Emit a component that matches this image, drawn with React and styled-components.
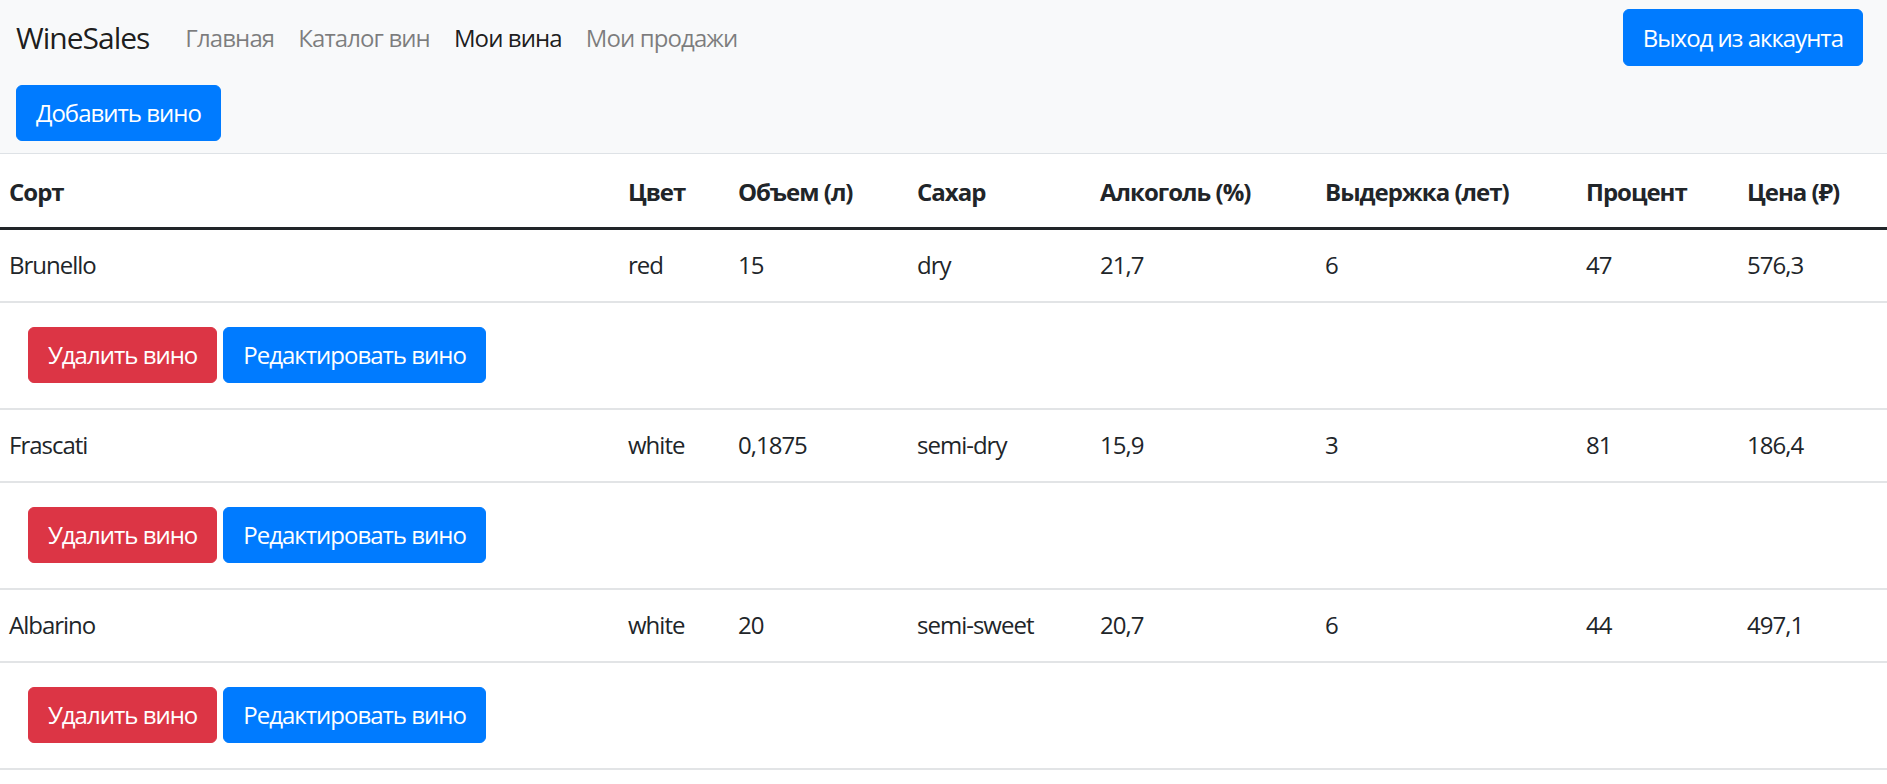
import styled, { createGlobalStyle } from "styled-components";

const GlobalStyle = createGlobalStyle`
  * { box-sizing: border-box; }
  html, body {
    margin: 0;
    padding: 0;
    background: #fff;
  }
  body {
    font-family: "Segoe UI", "Open Sans", "Noto Sans", sans-serif;
    font-size: 24px;
    line-height: 1.5;
    color: #212529;
    letter-spacing: -1px;
  }
`;

const wines = [
  { sort: "Brunello", color: "red", volume: "15", sugar: "dry", alcohol: "21,7", age: "6", percent: "47", price: "576,3" },
  { sort: "Frascati", color: "white", volume: "0,1875", sugar: "semi-dry", alcohol: "15,9", age: "3", percent: "81", price: "186,4" },
  { sort: "Albarino", color: "white", volume: "20", sugar: "semi-sweet", alcohol: "20,7", age: "6", percent: "44", price: "497,1" },
];

const columns = [
  { title: "Сорт", width: 619 },
  { title: "Цвет", width: 110 },
  { title: "Объем (л)", width: 179 },
  { title: "Сахар", width: 183 },
  { title: "Алкоголь (%)", width: 225 },
  { title: "Выдержка (лет)", width: 261 },
  { title: "Процент", width: 161 },
  { title: "Цена (₽)", width: 149 },
];

export default function App() {
  return (
    <>
      <GlobalStyle />
      <Navbar>
        <NavTop>
          <Brand href="#">WineSales</Brand>
          <NavList>
            <li><NavLink href="#">Главная</NavLink></li>
            <li><NavLink href="#">Каталог вин</NavLink></li>
            <li><NavLink href="#" $active>Мои вина</NavLink></li>
            <li><NavLink href="#">Мои продажи</NavLink></li>
          </NavList>
          <LogoutButton $variant="primary">Выход из аккаунта</LogoutButton>
        </NavTop>
        <NavBottom>
          <Button $variant="primary">Добавить вино</Button>
        </NavBottom>
      </Navbar>

      <Table>
        <colgroup>
          {columns.map((c) => (
            <col key={c.title} style={{ width: c.width }} />
          ))}
        </colgroup>
        <thead>
          <tr>
            {columns.map((c) => (
              <Th key={c.title}>{c.title}</Th>
            ))}
          </tr>
        </thead>
        <tbody>
          {wines.map((w) => (
            <WineRows key={w.sort} wine={w} />
          ))}
        </tbody>
      </Table>
    </>
  );
}

function WineRows({ wine }) {
  const cells = [wine.sort, wine.color, wine.volume, wine.sugar, wine.alcohol, wine.age, wine.percent, wine.price];
  return (
    <>
      <tr>
        {cells.map((v, i) => (
          <Td key={i}>{v}</Td>
        ))}
      </tr>
      <tr>
        <ActionCell colSpan={8}>
          <Actions>
            <Button $variant="danger">Удалить вино</Button>
            <Button $variant="primary">Редактировать вино</Button>
          </Actions>
        </ActionCell>
      </tr>
    </>
  );
}

const Navbar = styled.nav`
  background: #f8f9fa;
  height: 153px;
  padding: 9px 24px 0 16px;
`;

const NavTop = styled.div`
  display: flex;
  align-items: center;
  height: 57px;
`;

const Brand = styled.a`
  font-size: 30px;
  line-height: 45px;
  color: rgba(0, 0, 0, 0.9);
  text-decoration: none;
  margin-right: 24px;
`;

const NavList = styled.ul`
  display: flex;
  list-style: none;
  margin: 0;
  padding: 0;
`;

const NavLink = styled.a`
  display: block;
  padding: 0 12px;
  line-height: 36px;
  letter-spacing: -0.9px;
  text-decoration: none;
  color: ${(p) => (p.$active ? "rgba(0, 0, 0, 0.9)" : "rgba(0, 0, 0, 0.5)")};
`;

const NavBottom = styled.div`
  display: flex;
  margin-top: 19px;
`;

const Button = styled.button`
  font-family: inherit;
  font-size: 24px;
  letter-spacing: -1px;
  line-height: 34px;
  padding: 10px 19px;
  border: 1px solid ${(p) => (p.$variant === "danger" ? "#dc3545" : "#007bff")};
  border-radius: 6px;
  background: ${(p) => (p.$variant === "danger" ? "#dc3545" : "#007bff")};
  color: #fff;
  cursor: pointer;
  white-space: nowrap;
`;

const LogoutButton = styled(Button)`
  margin-left: auto;
  line-height: 35px;
`;

const Table = styled.table`
  width: 100%;
  border-collapse: collapse;
  table-layout: fixed;
  border-top: 1px solid #dee2e6;
`;

const Th = styled.th`
  height: 75px;
  padding: 3px 9px 0;
  text-align: left;
  font-weight: 700;
  vertical-align: middle;
  border-bottom: 3px solid #212529;
  white-space: nowrap;
`;

const Td = styled.td`
  height: 73px;
  padding: 0 9px;
  vertical-align: middle;
  border-bottom: 2px solid #e2e4e6;
`;

const ActionCell = styled.td`
  height: 107px;
  padding: 0 0 0 28px;
  vertical-align: middle;
  border-bottom: 2px solid #e2e4e6;
`;

const Actions = styled.div`
  display: flex;
  gap: 6px;
`;
